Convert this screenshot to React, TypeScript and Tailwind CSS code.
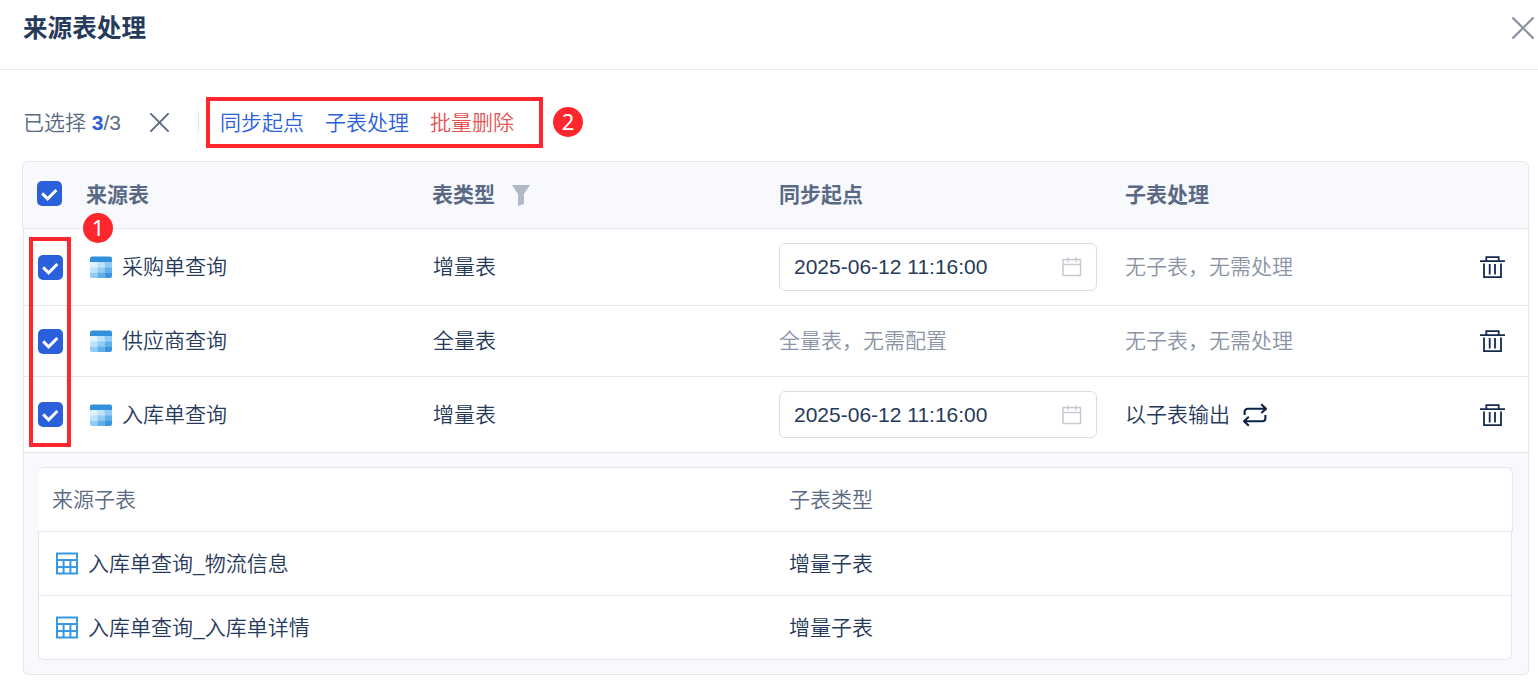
import type { ReactNode } from "react";
import clsx from "clsx";

interface SourceTable { name: string; type: string; start: string | null; sub: string; hasSub: boolean; height: string; inputHeight: string }

const tables: SourceTable[] = [
  { name: "采购单查询", type: "增量表", start: "2025-06-12 11:16:00", sub: "无子表，无需处理", hasSub: false, height: "h-[77px]", inputHeight: "h-12" },
  { name: "供应商查询", type: "全量表", start: null, sub: "无子表，无需处理", hasSub: false, height: "h-[71px]", inputHeight: "h-12" },
  { name: "入库单查询", type: "增量表", start: "2025-06-12 11:16:00", sub: "以子表输出", hasSub: true, height: "h-[76px]", inputHeight: "h-[47px]" },
];

const subTables = [
  { name: "入库单查询_物流信息", type: "增量子表" },
  { name: "入库单查询_入库单详情", type: "增量子表" },
];

const cells = [
  ["#dff2fe", "#bde2fc", "#90ccf7"],
  ["#bde2fc", "#90ccf7", "#60aeea"],
  ["#90ccf7", "#60aeea", "#3b95de"],
];

const headColumns = "grid grid-cols-[63px_347px_346px_347px_1fr] items-center";
const bodyColumns = "grid grid-cols-[62px_347px_346px_346px_1fr] items-center";

function CloseIcon({ className, width }: { className: string; width: number }) {
  return (
    <svg viewBox="0 0 20 20" className={className} fill="none" stroke="currentColor" strokeWidth={width} strokeLinecap="round">
      <path d="M1 1 19 19M19 1 1 19" />
    </svg>
  );
}

function Checkbox() {
  return (
    <span className="flex h-[25px] w-[25px] shrink-0 items-center justify-center rounded-[5px] bg-[#2b60dc]">
      <svg viewBox="0 0 25 25" className="h-[25px] w-[25px]" fill="none" stroke="#fff" strokeWidth="3">
        <path d="M5.2 12.4 10.6 17.8 19.4 9" />
      </svg>
    </span>
  );
}

function TableIcon() {
  return (
    <svg viewBox="0 0 22 22" className="h-[22px] w-[22px] shrink-0">
      <clipPath id="tableIcon"><rect y=".5" width="22" height="21.5" rx="2" /></clipPath>
      <g clipPath="url(#tableIcon)">
        <rect width="22" height="7" fill="#3390dc" />
        {cells.map((row, y) => row.map((fill, x) => (
          <rect key={`${x}-${y}`} x={x * 7.33} y={6 + y * 5.33} width="7.4" height="5.5" fill={fill} />
        )))}
      </g>
    </svg>
  );
}

function SubTableIcon() {
  return (
    <svg viewBox="0 0 23 23" className="h-[23px] w-[23px] shrink-0" fill="none" stroke="#3a98e2" strokeWidth="2">
      <path d="M2 1.5h20v20H2zM2 8h20M2 15h20M8.6 8v13.5M15.4 8v13.5" />
    </svg>
  );
}

function CalendarIcon() {
  return (
    <svg viewBox="0 0 20 20" className="h-5 w-5" fill="none" stroke="#c5cad3" strokeWidth="1.5">
      <path d="M1 2.5h17.5v16H1zM1 7.5h17.5M6 .5V5M14 .5V5" />
    </svg>
  );
}

function TrashIcon() {
  return (
    <svg viewBox="0 0 25 24" className="h-6 w-[25px]" fill="none" stroke="#152a50" strokeWidth="1.8">
      <path d="M0 6.2h25M6.3 6.2v-4h12.4v4M4 8.5v13.7h17V8.5M9.7 9V19.5M15 9V19.5" />
    </svg>
  );
}

function SwitchIcon() {
  return (
    <svg viewBox="0 0 24 24" className="h-6 w-6" fill="none" stroke="#0f2247" strokeWidth="2.1" strokeLinejoin="round">
      <path d="M1.6 12V8.8a3 3 0 0 1 3-3H23M18.2 1.2 23 5.8 18.4 10M22.4 12v3.2a3 3 0 0 1-3 3H1M5.8 13.8 1 18.2 5.8 22.8" />
    </svg>
  );
}

function Marker({ children, className }: { children: ReactNode; className: string }) {
  return (
    <span className={clsx("absolute flex h-[30px] w-[30px] items-center justify-center rounded-full bg-[#ff262d] pb-0.5 font-['Noto_Sans'] text-[22px] font-normal leading-[26px] text-white", className)}>
      {children}
    </span>
  );
}

export default function App() {
  return (
    <div className="h-[681px] w-[1538px] overflow-hidden bg-white font-['Liberation_Sans','Noto_Sans_CJK_SC',sans-serif] text-[21px] font-[350] leading-[30px] text-[#263a5b]">
      <header className="flex h-[70px] items-start justify-between border-b border-[#e3e6ec] pl-[23px] pr-1 pt-[13px]">
        <h1 className="pt-px text-[24.6px] font-bold">来源表处理</h1>
        <CloseIcon className="mt-1 h-[22px] w-[22px] text-[#8a94a6]" width={2} />
      </header>

      <div className="flex h-[91px] items-center pl-[23px] pt-[14px]">
        <span className="text-[#5a6a84]">已选择 <b className="font-bold text-[#2b60dc]">3</b>/3</span>
        <CloseIcon className="ml-[29px] h-[19px] w-[19px] text-[#5a6a84]" width={2} />
        <span className="ml-[29px] h-[19px] w-px bg-[#dfe3ea]" />
        <div className="relative ml-[7px] flex h-[51px] w-[337px] items-center gap-[21px] border-4 border-[#ff262d] pl-[10px]">
          <a className="text-[#2b60dc]">同步起点</a>
          <a className="text-[#2b60dc]">子表处理</a>
          <a className="text-[#e65353]">批量删除</a>
          <Marker className="left-[343px] top-[6px]">2</Marker>
        </div>
      </div>

      <section className="ml-[22px] w-[1507px]">
        <div className={clsx(headColumns, "h-[68px] rounded-t-[6px] border border-[#e3e6ec] bg-[#f8f9fd] font-bold text-[#5a6a84]")}>
          <span className="mb-[3px] pl-[14px]"><Checkbox /></span>
          <span>来源表</span>
          <span className="-ml-px flex items-center">
            表类型
            <svg viewBox="0 0 18 21" className="ml-[17px] h-[21px] w-[18px]" fill="#b1b8c6"><path d="M0 0h18L12 9v10l-6 2V9z" /></svg>
          </span>
          <span>同步起点</span>
          <span className="-ml-px">子表处理</span>
        </div>

        <div className="relative ml-px rounded-b-[6px] border-x border-b border-[#e3e6ec]">
          {tables.map((row) => (
            <div key={row.name} className={clsx(bodyColumns, row.height, "border-b border-[#e3e6ec]")}>
              <span className="pl-[14px]"><Checkbox /></span>
              <span className="flex items-center gap-[10px] pl-1"><TableIcon />{row.name}</span>
              <span>{row.type}</span>
              {row.start ? (
                <span className={clsx("flex w-[318px] items-center justify-between rounded-[6px] border border-[#d9dde6] pl-[14px] pr-[14px]", row.inputHeight)}>
                  {row.start}
                  <CalendarIcon />
                </span>
              ) : <span className="text-[#8a94a6]">全量表，无需配置</span>}
              <span className="flex items-center justify-between pr-[23px]">
                {row.hasSub ? <span className="flex items-center gap-[13px]">{row.sub}<SwitchIcon /></span> : <span className="text-[#8a94a6]">{row.sub}</span>}
                <TrashIcon />
              </span>
            </div>
          ))}

          <div className="rounded-b-[5px] bg-[#f8f9fd] pb-[14px] pl-[14px] pr-[15px] pt-[14px]">
            <div className="grid h-[65px] w-[1475px] grid-cols-[737px_1fr] items-center rounded-t-[6px] border-y border-r border-[#e3e6ec] bg-white pl-[14px] text-[#5a6a84]">
              <span>来源子表</span>
              <span>子表类型</span>
            </div>
            <div className="w-[1474px] rounded-b-[6px] border-x border-b border-[#e3e6ec] bg-white">
              {subTables.map((sub, i) => (
                <div key={sub.name} className={clsx("grid grid-cols-[737px_1fr] items-center pl-[13px]", i === 0 ? "h-16 border-b border-[#e3e6ec]" : "h-[63px]")}>
                  <span className="flex items-center gap-[10px] pl-[3px]"><SubTableIcon />{sub.name}</span>
                  <span>{sub.type}</span>
                </div>
              ))}
            </div>
          </div>

          {/* step highlights */}
          <div className="absolute left-[5px] top-2 h-[210px] w-[42px] border-4 border-[#ff262d]" />
          <Marker className="left-[59px] top-[-16px]">1</Marker>
        </div>
      </section>
    </div>
  );
}
